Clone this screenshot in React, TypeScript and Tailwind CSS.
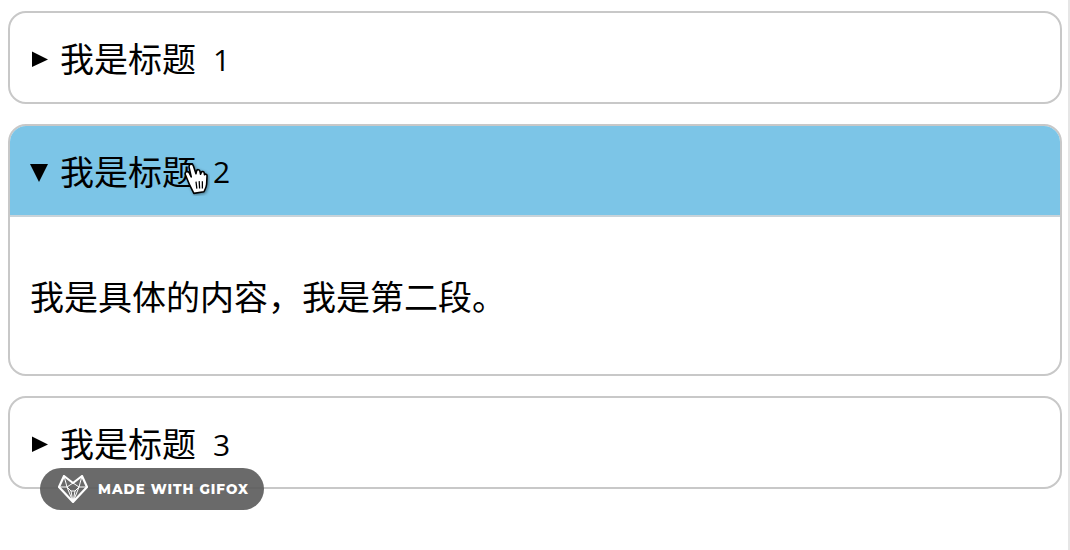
const cjk = "font-['Noto_Sans_CJK_SC','Noto_Sans',sans-serif]";

function Header({ n, open }: { n: number; open?: boolean }) {
  return (
    <div className={`flex items-center pl-[20px] ${open ? "h-[91px] border-b-2 border-[#c8d3d9] bg-[#7cc5e7]" : "h-[90px]"}`}>
      <svg width="19" height="20" viewBox="0 0 19 20" className="mt-[2px] shrink-0">
        {open ? <polygon points="0,2 18,2 9,20" fill="#000" /> : <polygon points="2,2.5 18,10.5 2,18" fill="#000" />}
      </svg>
      <span className="ml-[11px] text-[34px] leading-none text-black">我是标题</span>
      <span className="ml-[17px] mt-[3px] font-['Open_Sans',sans-serif] text-[30px] leading-none text-black">{n}</span>
    </div>
  );
}

export default function App() {
  return (
    <div className={`relative h-[550px] w-[1070px] overflow-hidden bg-white ${cjk}`}>
      <div className="flex h-full w-[1068px] flex-col gap-[20px] pt-[11px] pl-[8px] pr-[6px]">
        <div className="h-[93px] overflow-hidden rounded-[18px] border-2 border-[#c8c8c8]">
          <Header n={1} />
        </div>
        <div className="h-[252px] overflow-hidden rounded-[18px] border-2 border-[#c8c8c8]">
          <Header n={2} open />
          <p className="pl-[20px] pt-[62px] text-[34px] leading-none text-black">我是具体的内容，我是第二段。</p>
        </div>
        <div className="h-[93px] overflow-hidden rounded-[18px] border-2 border-[#c8c8c8]">
          <Header n={3} />
        </div>
      </div>
      <div className="absolute right-0 top-0 h-full w-[2px] bg-[#e6e6e6]" />
      <svg width="28" height="34" viewBox="0 0 26 32" className="absolute left-[182px] top-[162px]">
        <path
          d="M3 12 C2 9.5 5 8 6.5 10 L8.5 14 L6.5 5 C6 2 9.5 1 10.5 3.5 L13 11 L13.5 8.5 C14 6.5 16.5 7 16.8 9 L17.3 11.5 L18 9.8 C18.6 8.3 20.6 8.8 20.8 10.5 L21 12 C21.6 11 23.4 11.4 23.4 13 L23 21 C22.8 24 21.5 26 20.5 28 L11 29.5 C9 26 6 20 3 12 Z"
          fill="#fff"
          stroke="#000"
          strokeWidth="1.5"
          strokeLinejoin="round"
          style={{ filter: "drop-shadow(1px 1.5px 1.5px rgba(0,0,0,.4))" }}
        />
        <path d="M13 18.5 L13.8 25 M16 18 L16.4 25 M19 18 L19 25" stroke="#000" strokeWidth="1.2" fill="none" />
      </svg>
      <div className="absolute left-[40px] top-[468px] flex h-[42px] w-[224px] items-center rounded-full bg-[#5a5a5a]/90 pl-[18px]">
        <svg width="30" height="28" viewBox="0 0 30 28" fill="none" stroke="#fff" strokeLinejoin="round" className="shrink-0">
          <path d="M1 12 L6 1 L15 8 L24 1 L29 12 L15 27 Z" strokeWidth="2.2" />
          <path d="M6 1 L9 12 L15 8 L21 12 L24 1 M1 12 L9 12 L15 27 L21 12 L29 12 M9 12 L13 16 L15 27 L17 16 L21 12 M13 16 L17 16" strokeWidth="1" />
        </svg>
        <span className="ml-[10px] font-['Montserrat','Inter',sans-serif] text-[13.5px] font-extrabold tracking-[1px] text-white whitespace-nowrap">MADE WITH GIFOX</span>
      </div>
    </div>
  );
}
